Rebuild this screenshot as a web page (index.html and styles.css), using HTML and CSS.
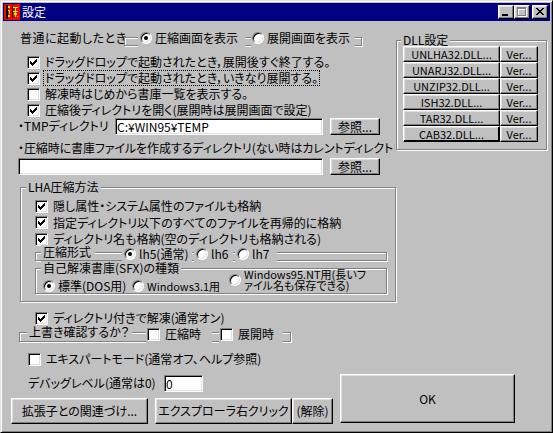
FILE: index.html
```html
<!DOCTYPE html>
<html>
<head>
<meta charset="utf-8">
<link rel="stylesheet" href="styles.css">
</head>
<body>
<div class="win">
  <div class="titlebar">
    <svg class="appicon" width="16" height="16" viewBox="0 0 16 16" shape-rendering="crispEdges">
      <rect width="16" height="16" fill="#f00"/>
      <rect x="2" y="1" width="2" height="14" fill="#000"/>
      <rect x="8" y="1" width="1" height="14" fill="#000"/>
      <path fill="#ff0" d="M4 2h2v2H4z M4 6h2v1H4z M5 7h1v3H5z M4 11h2v2H4z M9 3h5v1H9z M11 4h1v9h-1z M9 7h5v1H9z M10 9h1v2h-1z M12 9h1v2h-1z M13 12h1v1h-1z"/>
    </svg>
    <span class="title">設定</span>
    <div class="tbtns">
      <span class="tbtn">
        <svg width="14" height="12" viewBox="0 0 14 12" shape-rendering="crispEdges"><rect x="3" y="8" width="6" height="2" fill="#000"/></svg>
      </span>
      <span class="tbtn">
        <svg width="14" height="12" viewBox="0 0 14 12" shape-rendering="crispEdges">
          <path fill="#fff" d="M3 2h9v2H3z M3 2h1v9H3z M11 2h1v9h-1z M3 10h9v1H3z"/>
          <path fill="#808080" d="M2 1h9v2H2z M2 1h1v9H2z M10 1h1v9h-1z M2 9h9v1H2z"/>
        </svg>
      </span>
      <span class="tbtn close">
        <svg width="14" height="12" viewBox="0 0 14 12" shape-rendering="crispEdges"><path fill="#000" d="M3 2h2v1H3z M9 2h2v1H9z M4 3h2v1H4z M8 3h2v1H8z M5 4h4v1H5z M6 5h2v1H6z M5 6h4v1H5z M4 7h2v1H4z M8 7h2v1H8z M3 8h2v1H3z M9 8h2v1H9z"/></svg>
      </span>
    </div>
  </div>

  <div class="client">
    <div class="top">
      <div class="left">
        <div class="startrow">
          <span class="startlabel">普通に起動したとき</span>
          <div class="etch startframe">
            <div class="ritem r-comp"><span class="rb on"></span>圧縮画面を表示</div>
            <div class="ritem r-exp"><span class="rb"></span>展開画面を表示</div>
          </div>
        </div>

        <div class="checks">
          <div class="cb"><span class="box"><svg width="7" height="7" viewBox="0 0 7 7" shape-rendering="crispEdges"><path d="M6 0h1v1H6z M5 1h2v1H5z M0 2h1v1H0z M4 2h3v1H4z M0 3h2v1H0z M3 3h3v1H3z M0 4h5v1H0z M1 5h3v1H1z M2 6h1v1H2z"/></svg></span><span class="txt">ドラッグドロップで起動されたとき，展開後すぐ終了する。</span></div>
          <div class="cb"><span class="box"><svg width="7" height="7" viewBox="0 0 7 7" shape-rendering="crispEdges"><path d="M6 0h1v1H6z M5 1h2v1H5z M0 2h1v1H0z M4 2h3v1H4z M0 3h2v1H0z M3 3h3v1H3z M0 4h5v1H0z M1 5h3v1H1z M2 6h1v1H2z"/></svg></span><span class="txt focus">ドラッグドロップで起動されたとき，いきなり展開する。</span></div>
          <div class="cb"><span class="box"></span><span class="txt">解凍時はじめから書庫一覧を表示する。</span></div>
          <div class="cb"><span class="box"><svg width="7" height="7" viewBox="0 0 7 7" shape-rendering="crispEdges"><path d="M6 0h1v1H6z M5 1h2v1H5z M0 2h1v1H0z M4 2h3v1H4z M0 3h2v1H0z M3 3h3v1H3z M0 4h5v1H0z M1 5h3v1H1z M2 6h1v1H2z"/></svg></span><span class="txt">圧縮後ディレクトリを開く(展開時は展開画面で設定)</span></div>
        </div>

        <div class="pathrow">
          <span class="pathlabel">・TMPディレクトリ</span>
          <div class="edit tmp">C:¥WIN95¥TEMP</div>
          <button class="btn browse">参照...</button>
        </div>
        <div class="arclabel">・圧縮時に書庫ファイルを作成するディレクトリ(ない時はカレントディレクトリ)</div>
        <div class="pathrow arcrow">
          <div class="edit arc"></div>
          <button class="btn browse">参照...</button>
        </div>

        <div class="etch lha">
          <span class="gtitle">LHA圧縮方法</span>
          <div class="lhachecks">
            <div class="cb"><span class="box"><svg width="7" height="7" viewBox="0 0 7 7" shape-rendering="crispEdges"><path d="M6 0h1v1H6z M5 1h2v1H5z M0 2h1v1H0z M4 2h3v1H4z M0 3h2v1H0z M3 3h3v1H3z M0 4h5v1H0z M1 5h3v1H1z M2 6h1v1H2z"/></svg></span><span class="txt">隠し属性・システム属性のファイルも格納</span></div>
            <div class="cb"><span class="box"><svg width="7" height="7" viewBox="0 0 7 7" shape-rendering="crispEdges"><path d="M6 0h1v1H6z M5 1h2v1H5z M0 2h1v1H0z M4 2h3v1H4z M0 3h2v1H0z M3 3h3v1H3z M0 4h5v1H0z M1 5h3v1H1z M2 6h1v1H2z"/></svg></span><span class="txt">指定ディレクトリ以下のすべてのファイルを再帰的に格納</span></div>
            <div class="cb"><span class="box"><svg width="7" height="7" viewBox="0 0 7 7" shape-rendering="crispEdges"><path d="M6 0h1v1H6z M5 1h2v1H5z M0 2h1v1H0z M4 2h3v1H4z M0 3h2v1H0z M3 3h3v1H3z M0 4h5v1H0z M1 5h3v1H1z M2 6h1v1H2z"/></svg></span><span class="txt">ディレクトリ名も格納(空のディレクトリも格納される)</span></div>
          </div>
          <div class="etch fmt">
            <span class="gtitle">圧縮形式</span>
            <div class="ritem r-lh5"><span class="rb on"></span>lh5(通常)</div>
            <div class="ritem r-lh6"><span class="rb"></span>lh6</div>
            <div class="ritem r-lh7"><span class="rb"></span>lh7</div>
          </div>
          <div class="etch sfx">
            <span class="gtitle">自己解凍書庫(SFX)の種類</span>
            <div class="sfxrow">
              <div class="sitem s-std"><span class="rb on"></span>標準(DOS用)</div>
              <div class="sitem s-w31"><span class="rb"></span>Windows3.1用</div>
              <div class="sitem s-w95"><span class="rb"></span><span>Windows95.NT用(長いフ<br>ァイル名も保存できる)</span></div>
            </div>
          </div>
        </div>

        <div class="cb dircb"><span class="box"><svg width="7" height="7" viewBox="0 0 7 7" shape-rendering="crispEdges"><path d="M6 0h1v1H6z M5 1h2v1H5z M0 2h1v1H0z M4 2h3v1H4z M0 3h2v1H0z M3 3h3v1H3z M0 4h5v1H0z M1 5h3v1H1z M2 6h1v1H2z"/></svg></span><span class="txt">ディレクトリ付きで解凍(通常オン)</span></div>

        <div class="etch overwrite">
          <span class="gtitle">上書き確認するか？</span>
          <div class="cb citem c-comp"><span class="box"></span><span class="txt">圧縮時</span></div>
          <div class="cb citem c-exp"><span class="box"></span><span class="txt">展開時</span></div>
        </div>

        <div class="cb expert"><span class="box"></span><span class="txt">エキスパートモード(通常オフ、ヘルプ参照)</span></div>
      </div>

      <div class="etch dll">
        <span class="gtitle">DLL設定</span>
        <div class="dllgrid">
          <button class="btn">UNLHA32.DLL...</button><button class="btn">Ver...</button>
          <button class="btn">UNARJ32.DLL...</button><button class="btn">Ver...</button>
          <button class="btn">UNZIP32.DLL...</button><button class="btn">Ver...</button>
          <button class="btn">ISH32.DLL...</button><button class="btn">Ver...</button>
          <button class="btn">TAR32.DLL...</button><button class="btn">Ver...</button>
          <button class="btn def">CAB32.DLL...</button><button class="btn">Ver...</button>
        </div>
      </div>
    </div>

    <div class="bottom">
      <div class="bleft">
        <div class="debugrow">
          <span class="debuglabel">デバッグレベル(通常は0)</span>
          <div class="edit dbg">0</div>
        </div>
        <div class="brow">
          <button class="btn assoc">拡張子との関連づけ...</button>
          <button class="btn explorer">エクスプローラ右クリック</button>
          <button class="btn unset">(解除)</button>
        </div>
      </div>
      <button class="btn ok">OK</button>
    </div>
  </div>
</div>
</body>
</html>
```

FILE: styles.css
```css
* {
    box-sizing: border-box;
}
body {
    margin: 0;
    background: #c0c0c0;
    font-family: "Noto Sans CJK JP", "Noto Sans", sans-serif;
    font-size: 12px;
    line-height: 14px;
    color: #000;
    font-feature-settings: "palt";
}

/* window frame */
.win {
    width: 553px;
    height: 433px;
    background: #c0c0c0;
    border: 1px solid;
    border-color: #dfdfdf #000 #000 #dfdfdf;
    box-shadow: inset 1px 1px #fff, inset -1px -1px #808080;
    padding: 2px;
    display: flex;
    flex-direction: column;
}
.titlebar {
    height: 18px;
    flex: none;
    background: #000080;
    color: #fff;
    display: flex;
    align-items: center;
    padding: 0 2px 0 1px;
}
.appicon {
    display: block;
    flex: none;
}
.title {
    margin-left: 2px;
    line-height: 18px;
}
.tbtns {
    margin-left: auto;
    display: flex;
}
.tbtn {
    width: 16px;
    height: 14px;
    background: #c0c0c0;
    border: 1px solid;
    border-color: #fff #000 #000 #fff;
    box-shadow: inset -1px -1px #808080, inset 1px 1px #dfdfdf;
}
.tbtn svg {
    display: block;
}
.tbtn.close {
    margin-left: 2px;
}

/* common controls */
.btn {
    font: inherit;
    color: #000;
    background: #c0c0c0;
    border: 1px solid;
    border-color: #fff #000 #000 #fff;
    box-shadow: inset -1px -1px #808080, inset 1px 1px #dfdfdf;
    padding: 0;
    display: flex;
    align-items: center;
    justify-content: center;
    white-space: nowrap;
}
.edit {
    background: #fff;
    border: 1px solid;
    border-color: #808080 #fff #fff #808080;
    box-shadow: inset 1px 1px #000, inset -1px -1px #dfdfdf;
    height: 17px;
    padding-left: 1px;
    line-height: 15px;
    white-space: nowrap;
    flex: none;
}
.etch {
    border: 1px solid #808080;
    box-shadow: inset 1px 1px #fff, 1px 1px #fff;
    flex: none;
}
.gtitle {
    background: #c0c0c0;
    padding: 0 2px;
    margin-top: -8px;
    line-height: 14px;
    white-space: nowrap;
    flex: none;
}
.cb {
    display: flex;
    align-items: center;
    height: 16px;
    white-space: nowrap;
}
.box {
    width: 13px;
    height: 13px;
    flex: none;
    background: #fff;
    border: 1px solid;
    border-color: #808080 #fff #fff #808080;
    box-shadow: inset 1px 1px #000, inset -1px -1px #dfdfdf;
    display: flex;
    align-items: center;
    justify-content: center;
    margin-right: 3px;
}
.box svg {
    display: block;
}
.txt {
    border: 1px solid transparent;
    padding: 0 1px;
    line-height: 14px;
}
.txt.focus {
    border: 1px dotted #000;
}
.rb {
    width: 12px;
    height: 12px;
    flex: none;
    border-radius: 50%;
    background: #fff;
    border: 1px solid;
    border-color: #808080 #fff #fff #808080;
    box-shadow: inset 1px 1px #000, inset -1px -1px #dfdfdf;
    display: flex;
    align-items: center;
    justify-content: center;
    margin-right: 3px;
}
.rb.on::after {
    content: "";
    width: 4px;
    height: 4px;
    border-radius: 50%;
    background: #000;
}
.ritem {
    display: flex;
    align-items: center;
    height: 19px;
    margin-top: -10px;
    background: #c0c0c0;
    white-space: nowrap;
    flex: none;
}

/* layout */
.top {
    display: flex;
    align-items: flex-start;
}
.left {
    margin-left: 15px;
    margin-top: 7px;
    width: 378px;
    flex: none;
}
.startrow {
    display: flex;
    align-items: flex-start;
    height: 19px;
}
.startlabel {
    width: 104px;
    margin-left: 2px;
    line-height: 19px;
    flex: none;
    white-space: nowrap;
    letter-spacing: 0.5px;
}
.startframe {
    width: 238px;
    height: 9px;
    margin-top: 9px;
    display: flex;
    align-items: flex-start;
}
.r-comp {
    margin-left: 13px;
    width: 107px;
    padding-left: 2px;
}
.r-exp {
    margin-left: 6px;
    width: 104px;
    padding-left: 1px;
}
.checks {
    margin-top: 7px;
}
.checks .cb {
    padding-left: 9px;
}
.pathrow {
    display: flex;
    align-items: flex-start;
}
.pathlabel {
    width: 97px;
    line-height: 16px;
    flex: none;
    white-space: nowrap;
}
.tmp {
    width: 208px;
}
.browse {
    width: 50px;
    height: 17px;
    margin-left: 7px;
}
.arclabel {
    margin-top: 5px;
    width: 377px;
    height: 16px;
    line-height: 16px;
    white-space: nowrap;
    overflow: hidden;
    letter-spacing: -0.1px;
}
.arcrow {
    margin-top: 2px;
}
.arc {
    width: 305px;
}

.lha {
    margin-top: 12px;
    margin-left: 2px;
    width: 376px;
    padding-bottom: 7px;
    display: flex;
    flex-direction: column;
    align-items: flex-start;
}
.lha > .gtitle {
    margin-left: 5px;
}
.lhachecks {
    margin-top: 4px;
    padding-left: 14px;
}
.lhachecks .cb:nth-child(2) {
    height: 17px;
}
.fmt {
    margin-top: 5px;
    margin-left: 14px;
    width: 352px;
    height: 9px;
    display: flex;
    align-items: flex-start;
}
.fmt .gtitle {
    margin-left: 5px;
    width: 54px;
}
.fmt .ritem {
    height: 16px;
    margin-top: -7px;
}
.r-lh5 {
    margin-left: 27px;
    width: 70px;
    padding-left: 2px;
}
.r-lh6 {
    margin-left: 2px;
    width: 39px;
    padding-left: 2px;
}
.r-lh7 {
    margin-left: 2px;
    width: 42px;
    padding-left: 2px;
}
.sfx {
    margin-top: 7px;
    margin-left: 14px;
    width: 352px;
    height: 26px;
    display: flex;
    flex-direction: column;
    align-items: flex-start;
}
.sfx .gtitle {
    margin-left: 5px;
    margin-bottom: -6px;
}
.sfxrow {
    display: flex;
    align-items: flex-end;
    height: 24px;
}
.sitem {
    display: flex;
    align-items: center;
    flex: none;
    line-height: 14px;
    white-space: nowrap;
}
.s-std {
    margin-left: 7px;
    width: 89px;
}
.s-w31 {
    width: 97px;
    font-size: 11px;
}
.s-w95 {
    font-size: 11px;
    line-height: 11px;
    margin-bottom: 2px;
}

.dircb {
    margin-top: 8px;
    padding-left: 17px;
}
.overwrite {
    margin-top: 6px;
    margin-left: 1px;
    width: 272px;
    height: 10px;
    display: flex;
    align-items: flex-start;
}
.overwrite .gtitle {
    margin-left: 7px;
    width: 105px;
}
.citem {
    height: 18px;
    margin-top: -8px;
    background: #c0c0c0;
    flex: none;
    padding-left: 1px;
}
.c-comp {
    margin-left: 14px;
    width: 66px;
}
.c-exp {
    margin-left: 7px;
    width: 64px;
}
.expert {
    margin-top: 9px;
    padding-left: 10px;
}

.dll {
    margin-top: 19px;
    width: 151px;
    padding-bottom: 7px;
    display: flex;
    flex-direction: column;
    align-items: flex-start;
}
.dll .gtitle {
    margin-left: 4px;
    margin-bottom: -1px;
}
.dllgrid {
    margin-left: 6px;
    display: grid;
    grid-template-columns: 97px 38px;
    grid-auto-rows: 16px;
}
.dllgrid .btn {
    font-size: 11px;
}
.dllgrid .def {
    box-shadow: inset -1px -1px #000, inset 1px 1px #dfdfdf;
}

.bottom {
    display: flex;
    align-items: flex-start;
    margin-top: 7px;
}
.bleft {
    margin-left: 8px;
    width: 322px;
    flex: none;
}
.debugrow {
    display: flex;
    margin-top: 1px;
}
.debuglabel {
    margin-left: 17px;
    width: 136px;
    line-height: 16px;
    flex: none;
    white-space: nowrap;
}
.dbg {
    width: 39px;
}
.brow {
    display: flex;
    margin-top: 6px;
}
.brow .btn {
    height: 26px;
}
.assoc {
    width: 137px;
}
.explorer {
    width: 137px;
    margin-left: 7px;
}
.unset {
    width: 41px;
}
.ok {
    width: 175px;
    height: 49px;
    margin-left: 7px;
}
```
